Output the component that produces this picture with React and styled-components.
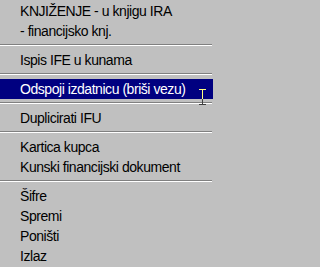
import React from 'react';
import styled, { createGlobalStyle } from 'styled-components';

const GlobalStyle = createGlobalStyle`
	html, body {
		margin: 0;
		padding: 0;
		background: #c0c0c0;
	}
	body {
		font-family: "Liberation Sans", Arial, sans-serif;
	}
`;

const menu = [
	{ label: 'KNJIŽENJE - u knjigu IRA' },
	{ label: '- financijsko knj.' },
	{ sep: true },
	{ label: 'Ispis IFE u kunama' },
	{ sep: true },
	{ label: 'Odspoji izdatnicu (briši vezu)', active: true },
	{ sep: true },
	{ label: 'Duplicirati IFU' },
	{ sep: true },
	{ label: 'Kartica kupca' },
	{ label: 'Kunski financijski dokument' },
	{ sep: true },
	{ label: 'Šifre' },
	{ label: 'Spremi' },
	{ label: 'Poništi' },
	{ label: 'Izlaz' },
];

export default function App() {
	return (
		<>
			<GlobalStyle />
			<Menu>
				{menu.map((item, i) =>
					item.sep ? (
						<Separator key={i} />
					) : (
						<Item key={i} $active={item.active}>
							{item.label}
						</Item>
					)
				)}
				<Cursor width="7" height="16" viewBox="0 0 7 16">
					{/* I-beam, drawn inverted over the highlight and the gray below */}
					<rect x="0" y="0" width="7" height="1" fill="#ffff7f" />
					<rect x="3" y="1" width="1" height="9" fill="#ffff7f" />
					<rect x="3" y="10" width="1" height="5" fill="#3f3f3f" />
					<rect x="0" y="15" width="7" height="1" fill="#3f3f3f" />
				</Cursor>
			</Menu>
		</>
	);
}

const Menu = styled.div`
	position: relative;
	width: 213px;
	height: 267px;
	padding-top: 1px;
	box-sizing: border-box;
	display: flex;
	flex-direction: column;
	background: #c0c0c0;
	overflow: hidden;
`;

const Item = styled.div`
	height: 20px;
	line-height: 20px;
	padding-left: 20px;
	font-size: 14px;
	letter-spacing: -0.45px;
	white-space: nowrap;
	color: ${(p) => (p.$active ? '#ffffff' : '#000000')};
	background: ${(p) => (p.$active ? '#000080' : 'transparent')};
`;

const Separator = styled.div`
	height: 9px;
	box-sizing: border-box;
	padding-top: 3px;
	padding-right: 1px;

	&::before {
		content: '';
		display: block;
		height: 1px;
		background: #808080;
		border-bottom: 1px solid #ffffff;
	}
`;

const Cursor = styled.svg`
	position: absolute;
	left: 199px;
	top: 89px;
	shape-rendering: crispEdges;
`;
